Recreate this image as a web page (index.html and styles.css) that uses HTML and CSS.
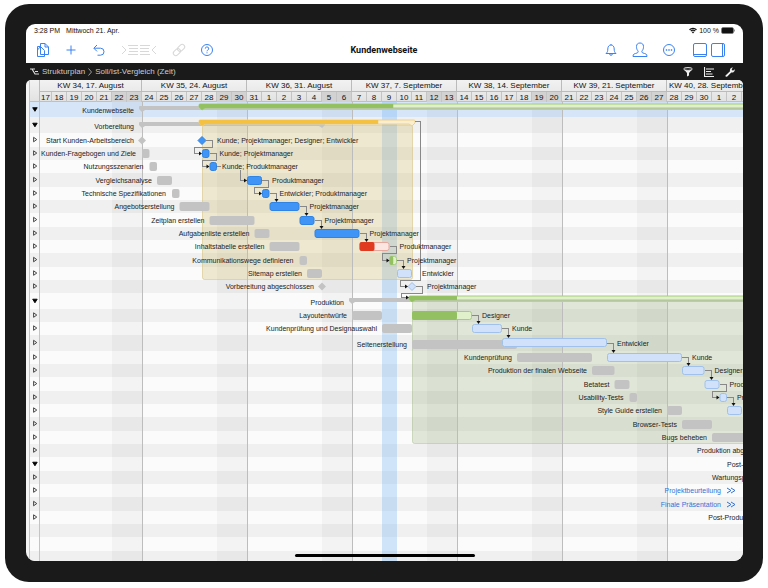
FILE: index.html
```html
<!DOCTYPE html>
<html lang="de">
<head>
    <meta charset="UTF-8">
    <meta name="viewport" content="width=device-width, initial-scale=1.0">
    <title>Kundenwebseite</title>
    <link rel="stylesheet" href="styles.css">
</head>
<body>
    <div class="device">
        <main class="screen">
            <div class="status-bar">
                <span>3:28 PM</span>
                <span>Mittwoch 21. Apr.</span>
                <span class="status-right">
                    <svg width="8" height="7" viewBox="0 0 16 13"><path d="M1 5a10 10 0 0 1 14 0M3.5 7.8a6.400 6.400 0 0 1 9 0" fill="none" stroke="#111" stroke-width="2.400"/><path d="M5.500 9.500a4 4 0 0 1 5 0L8 12.500z" fill="#111"/></svg>
                    <span>100 %</span>
                    <svg width="14" height="7" viewBox="0 0 14 7"><rect x=".5" y=".5" width="12" height="6" rx="1.500" fill="#111" stroke="#777" stroke-width=".6"/><path d="M13.300 2.500v2" stroke="#777"/></svg>
                </span>
            </div>

            <header class="toolbar">
                <div class="tools">
                    <button aria-label="Dokumente"><svg viewBox="0 0 16 16"><path d="M5.500 4.500h-3v10h7v-2M5.500 12.500v-11h4.500l3.500 3.500v7.500zM10 1.500V5h3.500M2.500 8l3-3.500 4 4v4"/></svg></button>
                    <button aria-label="Neu"><svg viewBox="0 0 16 16"><path d="M8 3.500v9M3.500 8h9"/></svg></button>
                    <button aria-label="Widerrufen"><svg viewBox="0 0 16 16"><path d="M6 3 2.800 6.200 6 9.400M3 6.200h6.500a3.500 3.500 0 0 1 0 7H6.500"/></svg></button>
                    <div class="pair indent">
                        <button aria-label="Einrücken" disabled><svg viewBox="0 0 16 16"><path d="m0 4 4 4-4 4M6 3.500h10M7 6.500h9M7 9.500h9M6 12.500h10"/></svg></button>
                        <button aria-label="Ausrücken" disabled><svg viewBox="0 0 16 16"><path d="m16 4-4 4 4 4M0 3.500h10M0 6.500h9M0 9.500h9M0 12.500h10"/></svg></button>
                    </div>
                    <button aria-label="Verknüpfen" disabled><svg viewBox="0 0 16 16"><g transform="rotate(-45 8 8)"><rect x="1" y="5.500" width="8" height="5" rx="2.500"/><rect x="7" y="5.500" width="8" height="5" rx="2.500"/></g></svg></button>
                    <button aria-label="Hilfe"><svg viewBox="0 0 16 16"><circle cx="8" cy="8" r="5.500"/><path d="M6.300 6.600a1.700 1.700 0 1 1 2.500 1.500Q8 8.500 8 9.300M8 10.300v1"/></svg></button>
                </div>
                <h1>Kundenwebseite</h1>
                <div class="tools tools-right">
                    <button aria-label="Mitteilungen"><svg viewBox="0 0 16 16"><path d="M3 11.500c1.500-1.300 1.800-2.500 1.800-4.500C4.800 4.600 6 3 8 3s3.200 1.600 3.200 4c0 2 .3 3.200 1.800 4.500zM6.700 12a1.300 1.300 0 0 0 2.600 0M8 3V2"/></svg></button>
                    <button aria-label="Ressourcen"><svg viewBox="0 0 16 16"><path d="M1 14.500c0-3 1.500-2.500 4-3.500 1.300-.5 1.500-1.300.8-2.300C4.800 7.500 4.500 6.300 4.500 4.500c0-2.300 1.400-3.500 3.500-3.500s3.500 1.200 3.500 3.500c0 1.800-.3 3-1.300 4.200-.7 1-.5 1.800.8 2.300 2.500 1 4 .5 4 3.500z"/></svg></button>
                    <button aria-label="Mehr"><svg viewBox="0 0 16 16"><circle cx="8" cy="8" r="5.500"/><path d="M4.800 8h1.400M7.300 8h1.400M9.800 8h1.400" stroke-width="1.600"/></svg></button>
                    <div class="pair panels">
                        <button aria-label="Untere Leiste"><svg viewBox="0 0 14 14"><rect x=".5" y=".5" width="13" height="13" rx="1.500"/><path d="M1 11.500h12"/></svg></button>
                        <button aria-label="Inspektor"><svg viewBox="0 0 14 14"><rect x=".5" y=".5" width="13" height="13" rx="1.500"/><path d="M11.500 1v12"/></svg></button>
                    </div>
                </div>
            </header>

            <nav class="path-bar">
                <svg width="9" height="8" viewBox="0 0 9 8"><path d="M0 1h5M2 1l3 5h4M5 3.500h3" fill="none" stroke="#ddd" stroke-width="1.200"/></svg>
                <a href="#">Strukturplan</a>
                <svg width="4" height="8" viewBox="0 0 4 8"><path d="m.5.5 3 3.500-3 3.500" fill="none" stroke="#bbb" stroke-width=".8"/></svg>
                <a href="#">Soll/Ist-Vergleich (Zeit)</a>
                <div class="path-actions">
                    <button aria-label="Filter"><svg viewBox="0 0 10 10"><ellipse cx="5" cy="2" rx="4.300" ry="1.400" fill="none" stroke="#eee"/><path d="M1 2.500 4 6v3.500l2-1V6l3-3.500L5 4z" fill="#eee"/></svg></button>
                    <button aria-label="Ansicht"><svg viewBox="0 0 10 10"><path d="M.5 0v9.500H10M2 2h8M2 4.500h5M2 7h6.500" fill="none" stroke="#eee" stroke-width="1.200"/></svg></button>
                    <button aria-label="Einstellungen"><svg viewBox="0 0 10 10"><path d="M.5 8.500 5 4.200C4.500 2 6 .3 8 .5L6.700 2l.3 1.200 1.300.3L9.700 2.200C10 4.300 8.300 6 6.300 5.500L2 9.700C1 10.200 0 9.500.5 8.500z" fill="#eee"/></svg></button>
                </div>
            </nav>

            <section class="chart">
                <div class="handle"></div>
                <div class="chart-main">
                    <div class="scale">
                        <div class="scale-corner"></div>
                        <div class="scale-rows">
                            <div class="weeks" id="weeks"></div>
                            <div class="days" id="days"></div>
                        </div>
                    </div>
                    <div class="rows" id="rows">
                        <svg class="plot" id="plot"></svg>
                    </div>
                </div>
            </section>
            <div class="home-bar"></div>
        </main>
        <span class="key key-side"></span>
        <span class="key key-left"></span>
        <span class="key key-right"></span>
    </div>
    <script src="gantt.js"></script>
</body>
</html>
```

FILE: styles.css
```css
* {
    box-sizing: border-box;
}
body {
    margin: 4px 5px;
    background: #fff;
    font-family: "Liberation Sans", Arial, sans-serif;
    font-size: 7px;
    color: #111;
}
button {
    display: block;
    margin: 0;
    padding: 0;
    border: none;
    background: none;
    color: inherit;
}
button svg {
    display: block;
    width: 100%;
    height: 100%;
}

/* device */
.device {
    position: relative;
    padding: 20px 20px 21px 21px;
    border-radius: 24px;
    background: #1a1a1a;
}
.screen {
    position: relative;
    overflow: hidden;
    border-radius: 9px;
    background: #1a1a1a;
}
.key {
    position: absolute;
    background: #333;
}
.key-side {
    right: -3px;
    bottom: 21px;
    width: 3px;
    height: 27px;
}
.key-left,
.key-right {
    bottom: -3px;
    width: 25px;
    height: 3px;
}
.key-left {
    right: 77px;
}
.key-right {
    right: 44px;
}
.home-bar {
    position: absolute;
    left: 50%;
    bottom: 4px;
    width: 180px;
    height: 3px;
    margin-left: -90px;
    border-radius: 2px;
    background: #000;
}

/* top bars */
.status-bar {
    display: flex;
    align-items: center;
    gap: 6px;
    height: 13px;
    padding: 0 8px;
    background: #fff;
}
.status-right {
    display: flex;
    align-items: center;
    gap: 2px;
    margin-left: auto;
}
.toolbar {
    display: grid;
    grid-template-columns: 1fr auto 1fr;
    align-items: center;
    height: 26px;
    padding: 0 18px 0 9px;
    background: #fff;
}
.toolbar h1 {
    margin: 0;
    padding-left: 8px;
    font-family: Roboto, "Liberation Sans", sans-serif;
    font-size: 9px;
    font-weight: 700;
}
.tools {
    display: flex;
    align-items: center;
    gap: 12px;
}
.tools-right {
    justify-content: flex-end;
    gap: 13px;
}
.tools button {
    width: 16px;
    height: 16px;
    color: #3b82f0;
}
.tools button:disabled {
    color: #d8d8d8;
}
.tools svg {
    fill: none;
    stroke: currentColor;
    stroke-width: 1;
}
.pair {
    display: flex;
}
.indent {
    gap: 2px;
    margin: 0 3px;
}
.panels {
    gap: 4px;
    margin-left: 3px;
}
.tools .panels button {
    width: 14px;
    height: 14px;
}
.path-bar {
    display: flex;
    align-items: center;
    gap: 3px;
    height: 17px;
    padding: 0 8px 0 4px;
    font-size: 8px;
}
.path-bar a {
    color: #ccc;
    text-decoration: none;
}
.path-actions {
    display: flex;
    gap: 11px;
    margin-left: auto;
}
.path-actions button {
    width: 10px;
    height: 10px;
}

/* chart */
.chart {
    display: flex;
    overflow: hidden;
    border-radius: 5px 5px 0 0;
    background: #f4f4f4;
}
.handle {
    width: 4px;
    border-right: 1px solid #c4c4c4;
}
.chart-main {
    flex: 1;
    min-width: 0;
}
.scale {
    display: flex;
    height: 22px;
    background: linear-gradient(#f2f2f2, #e2e2e2);
    border-bottom: 1px solid #a9c4ea;
}
.scale-corner {
    width: 10px;
    border-right: 1px solid #bbb;
}
.scale-rows {
    flex: 1;
    min-width: 0;
}
.weeks,
.days {
    display: flex;
    overflow: hidden;
    line-height: 11px;
    font-size: 8px;
    text-align: center;
    white-space: nowrap;
}
.weeks {
    border-bottom: 1px solid #bbb;
}
.weeks span {
    flex: 0 0 105px;
    border-right: 1px solid #bbb;
}
.weeks span:first-child {
    flex-basis: 102px;
}
.weeks span:last-child {
    flex: 1;
    min-width: 0;
    padding-left: 2px;
    border-right: none;
    text-align: left;
}
.days span {
    flex: 0 0 15px;
    border-right: 1px solid #c4c4c4;
}
.days span:first-child {
    flex-basis: 12px;
}
.days .weekend {
    background: #d2d2d2;
}
.rows {
    position: relative;
}
.row {
    height: 13px;
    background: #fbfbfb;
}
.row:nth-of-type(3n) {
    height: 14px;
}
.row:nth-of-type(even) {
    background: #f0f0f0;
}
.row.summary {
    height: 16px;
}
.row.selected {
    height: 15px;
    background: #d6e5f8;
}
.row:last-of-type {
    height: 10px;
}
.toggle {
    width: 10px;
    height: 100%;
    border-right: 1px solid #c4c4c4;
}
.toggle svg {
    fill: none;
    stroke: #333;
    stroke-width: 1;
}
.toggle[aria-expanded="true"] svg {
    fill: #000;
    stroke: #000;
}

/* drawing over the rows */
.plot {
    position: absolute;
    top: 0;
    left: 10px;
    width: calc(100% - 10px);
    height: 100%;
    overflow: hidden;
}
.plot text {
    font-size: 7px;
    fill: #222;
}
.plot a text {
    fill: #2f73d9;
}
.weekend-col {
    fill: rgba(0, 0, 0, 0.03);
}
.today-col {
    fill: rgba(110, 175, 245, 0.3);
}
.week-line {
    stroke: #bdbdbd;
    shape-rendering: crispEdges;
}
.area-yellow {
    fill: rgba(205, 175, 85, 0.25);
    stroke: rgba(205, 175, 85, 0.4);
}
.area-green {
    fill: rgba(120, 155, 85, 0.2);
    stroke: rgba(120, 155, 85, 0.3);
}
.link {
    fill: none;
    stroke: #888;
    shape-rendering: crispEdges;
}
.arrow {
    fill: #111;
}
.plan {
    fill: #c3c3c3;
}
.blue {
    fill: #3f94f6;
    stroke: #2f83e4;
}
.open {
    fill: #d0e1f9;
    stroke: #9fc1ec;
}
.green {
    fill: #93c162;
}
.green-rest {
    fill: #e0f0cb;
    stroke: #a6cc7d;
}
.red {
    fill: #e03a20;
}
.red-rest {
    fill: #fce6e2;
    stroke: #e6a79d;
}
.yellow {
    fill: #f4c142;
}
.yellow-rest {
    fill: #fbeed0;
    stroke: #ecd28c;
}
```

FILE: gantt.js
```js
const DAY = 15;
const START = new Date(2020, 7, 17);
const NS = 'http://www.w3.org/2000/svg';

// plan / real: [start, end] in days since 17. August, done: day the progress reaches
const tasks = [
    { name: 'Kundenwebseite', kind: 'summary', selected: true, plan: [7, 60], real: [11, 60], done: 23.75, color: 'green' },
    { name: 'Vorbereitung', kind: 'summary', plan: [7, 19], real: [11, 25], done: 22.75, color: 'yellow' },
    { name: 'Start Kunden-Arbeitsbereich', kind: 'milestone', plan: [7, 7], real: [11, 11], color: 'blue', who: 'Kunde; Projektmanager; Designer; Entwickler' },
    { name: 'Kunden-Fragebogen und Ziele', plan: [7, 7.5], real: [11, 11.5], color: 'blue', who: 'Kunde; Projektmanager' },
    { name: 'Nutzungsszenarien', plan: [7.5, 8], real: [11.5, 12], color: 'blue', who: 'Kunde; Produktmanager', near: true },
    { name: 'Vergleichsanalyse', plan: [8, 9], real: [14, 15], color: 'blue', who: 'Produktmanager' },
    { name: 'Technische Spezifikationen', plan: [9, 9.5], real: [15, 15.5], color: 'blue', who: 'Entwickler; Produktmanager' },
    { name: 'Angebotserstellung', plan: [9.5, 11.5], real: [15.5, 17.5], color: 'blue', who: 'Projektmanager' },
    { name: 'Zeitplan erstellen', plan: [11.5, 14.5], real: [17.5, 18.5], color: 'blue', who: 'Projektmanager' },
    { name: 'Aufgabenliste erstellen', plan: [14.5, 15.5], real: [18.5, 21.5], color: 'blue', who: 'Projektmanager' },
    { name: 'Inhaltstabelle erstellen', plan: [15.5, 17.5], real: [21.5, 23.5], done: 22.5, color: 'red', who: 'Produktmanager' },
    { name: 'Kommunikationswege definieren', plan: [17.5, 18], real: [23.5, 24], done: 23.75, color: 'green', who: 'Projektmanager' },
    { name: 'Sitemap erstellen', plan: [18, 19], real: [24, 25], color: 'open', who: 'Entwickler' },
    { name: 'Vorbereitung abgeschlossen', kind: 'milestone', plan: [19, 19], real: [25, 25], color: 'open', who: 'Projektmanager' },
    { name: 'Produktion', kind: 'summary', plan: [21, 60], real: [25, 60], done: 28, color: 'green' },
    { name: 'Layoutentwürfe', plan: [21, 23], real: [25, 29], done: 28, color: 'green', who: 'Designer' },
    { name: 'Kundenprüfung und Designauswahl', plan: [23, 25], real: [29, 31], color: 'open', who: 'Kunde' },
    { name: 'Seitenerstellung', tall: true, plan: [25, 32], real: [31, 38], color: 'open', who: 'Entwickler' },
    { name: 'Kundenprüfung', plan: [32, 37], real: [38, 43], color: 'open', who: 'Kunde' },
    { name: 'Produktion der finalen Webseite', plan: [37, 38.5], real: [43, 44.5], color: 'open', who: 'Designer; Entwickler' },
    { name: 'Betatest', plan: [38.5, 39.5], real: [44.5, 45.5], color: 'open', who: 'Produktmanager' },
    { name: 'Usability-Tests', plan: [39.5, 40], real: [45.5, 46], color: 'open', who: 'Produktmanager' },
    { name: 'Style Guide erstellen', plan: [42, 43], real: [46, 47], color: 'open' },
    { name: 'Browser-Tests', plan: [43, 45] },
    { name: 'Bugs beheben', plan: [45, 49] },
    { name: 'Produktion abgeschlossen', textFrom: 44 },
    { name: 'Post-Produktion', kind: 'summary', flat: true, textFrom: 46 },
    { name: 'Wartungsplan', textFrom: 45 },
    { name: 'Projektbeurteilung', offscreen: true },
    { name: 'Finale Präsentation', offscreen: true },
    { name: 'Post-Produktion abgeschlossen', textFrom: 44.75 },
    {}, {}, {}
];

const rowsEl = document.getElementById('rows');
const plot = document.getElementById('plot');

function x(day) {
    return day * DAY - 3;
}

function add(tag, attrs, text, parent = plot) {
    const el = document.createElementNS(NS, tag);
    for (const key in attrs) el.setAttribute(key, attrs[key]);
    if (text) el.textContent = text;
    parent.appendChild(el);
    return el;
}

function cell(parent, text, className) {
    const el = document.createElement('span');
    el.textContent = text;
    if (className) el.className = className;
    parent.appendChild(el);
}

// rows with their disclosure buttons
tasks.forEach(t => {
    const row = document.createElement('div');
    row.className = 'row';
    if ((t.kind === 'summary' && !t.flat) || t.tall) row.classList.add('summary');
    if (t.selected) row.classList.add('selected');
    const open = t.kind === 'summary';
    const shape = open ? 'M3 4.500h5L5.500 8.500z' : 'M4 3.500v5l3.500-2.500z';
    row.innerHTML = t.name
        ? `<button class="toggle" aria-label="${t.name}" aria-expanded="${open}"><svg viewBox="0 0 10 13"><path d="${shape}"/></svg></button>`
        : '<div class="toggle"></div>';
    rowsEl.appendChild(row);
    t.row = row;
});

// time scale
const width = plot.getBoundingClientRect().width;
const height = rowsEl.offsetHeight;
const dayCount = Math.floor((width + 3) / DAY);
const weeks = document.getElementById('weeks');
const days = document.getElementById('days');

for (let d = 0; d < dayCount; d++) {
    const date = new Date(START);
    date.setDate(START.getDate() + d);
    const weekend = d % 7 > 4;
    cell(days, date.getDate(), weekend ? 'weekend' : '');
    if (weekend) add('rect', { class: 'weekend-col', x: x(d), y: 0, width: DAY, height });
    if (d % 7 === 0) {
        const month = date.toLocaleDateString('de-DE', { month: 'long' });
        cell(weeks, `KW ${34 + d / 7}, ${date.getDate()}. ${month}`);
    }
}
add('rect', { class: 'today-col', x: x(23), y: 0, width: DAY, height });

tasks.forEach(t => {
    t.top = t.row.offsetTop;
    t.mid = t.top + Math.floor(t.row.offsetHeight / 2);
});

function area(from, to, first, last, className) {
    const y = tasks[first].mid;
    add('rect', { class: className, x: x(from) + 0.5, y, width: (to - from) * DAY, height: tasks[last].top - y - 0.5, rx: 2 });
}
area(11, 25, 1, 13, 'area-yellow');
area(25, 60, 14, 25, 'area-green');

for (let d = 7; d < dayCount; d += 7) {
    add('line', { class: 'week-line', x1: x(d) + 0.5, x2: x(d) + 0.5, y1: 0, y2: height });
}

function bar(from, to, y, className, stroked) {
    const o = stroked ? 0.5 : 0;
    add('rect', { class: className, x: x(from) + o, y: y + o, width: (to - from) * DAY - o * 2, height: 9 - o * 2, rx: 2 });
}

function diamond(day, mid, className) {
    add('path', { class: className, d: `M${x(day) - 4} ${mid}l4-4 4 4-4 4z` });
}

function bracket(from, to, y, className) {
    add('path', { class: className, d: `M${x(from) - 3} ${y + 1}q0-1 1-1H${x(to) + 2}q1 0 1 1v2l-3 3-3-2H${x(from) + 3}l-3 2-3-3z` });
}

function drawSummary(t) {
    const y = t.mid - 5;
    bracket(t.plan[0], t.plan[1], y + 2, 'plan');
    bracket(t.real[0], t.real[1], y, t.color + '-rest');
    add('path', { class: t.color, d: `M${x(t.real[0]) - 3} ${y + 1}q0-1 1-1H${x(t.done)}v4H${x(t.real[0]) + 3}l-3 2-3-3z` });
}

function drawTask(t) {
    const shift = t.tall ? 1 : 0;
    if (t.kind === 'milestone') {
        diamond(t.plan[0], t.mid + 0.5, 'plan');
        diamond(t.real[0], t.mid + 0.5, t.color);
        return;
    }
    bar(t.plan[0], t.plan[1], t.mid - 4 + shift, 'plan');
    if (!t.real) return;
    if (t.done) {
        bar(t.real[0], t.real[1], t.mid - 4, t.color + '-rest', true);
        bar(t.real[0], t.done, t.mid - 4, t.color);
    } else {
        bar(t.real[0], t.real[1], t.mid - 4 - shift, t.color, true);
    }
}

tasks.forEach(t => {
    if (!t.plan) return;
    if (t.kind === 'summary') drawSummary(t);
    else drawTask(t);
});

function arrow(px, py, down) {
    const d = down ? `M${px - 2} ${py - 3}h4l-2 3z` : `M${px - 3} ${py - 2}v4l3-2z`;
    add('path', { class: 'arrow', d });
}

// successor starts where the task ends: straight down on its bar
function linkDown(i) {
    const a = tasks[i], b = tasks[i + 1];
    const px = Math.round(x(a.real[1])) + 6.5;
    const end = b.mid - (b.tall ? 5 : 4);
    add('path', { class: 'link', d: `M${x(a.real[1])} ${a.mid + 0.5}H${px}V${end - 2}` });
    arrow(px, end, true);
}

// short bars: loop back and enter from the left
function linkBack(i, fromX, toX) {
    const a = tasks[i], b = tasks[i + 1];
    const right = Math.round(fromX) + 6.5;
    const left = Math.round(toX) - 7.5;
    const y2 = b.kind === 'summary' ? b.mid - 4 : b.mid;
    add('path', { class: 'link', d: `M${fromX} ${a.mid + 0.5}H${right}V${b.top + 0.5}H${left}V${y2 + 0.5}H${toX - 2}` });
    arrow(toX, y2 + 0.5, false);
}

linkBack(2, x(11) + 4, x(11));
linkBack(3, x(11.5), x(11.5));
add('path', { class: 'link', d: `M${x(12)} ${tasks[4].mid + 0.5}h4M${x(13.5) + 0.5} ${tasks[4].mid + 4}V${tasks[5].mid + 0.5}H${x(14)}` });
arrow(x(14), tasks[5].mid + 0.5, false);
linkBack(5, x(15), x(15));
[6, 7, 8, 9].forEach(linkDown);
linkBack(10, x(23.5), x(23.5));
linkDown(11);
add('path', { class: 'link', d: `M${x(25) + 3} ${tasks[1].mid - 3.5}h5.500V${tasks[13].top + 0.5}H${x(24) + 3.5}V${tasks[13].mid + 0.5}H${x(25) - 6}` });
arrow(x(25) - 4, tasks[13].mid + 0.5, false);
linkBack(13, x(25) + 4, x(25) - 3);
[15, 16, 17, 18, 19].forEach(linkDown);
linkBack(20, x(45.5), x(45.5));
linkDown(21);

// space between a planned bar and its name
function nameGap(t) {
    if (t.kind) return 8;
    return t.plan[1] - t.plan[0] < 1 ? 6 : 5;
}

// names left of the planned bar, resources right of the real one
tasks.forEach(t => {
    if (!t.name) return;
    const y = t.mid + (t.row.classList.contains('summary') ? 4 : 3);
    if (t.plan) {
        add('text', { x: x(t.plan[0]) - nameGap(t), y, 'text-anchor': 'end' }, t.name);
        if (t.who) {
            const space = t.kind === 'milestone' ? 15 : t.near ? 5 : 10;
            add('text', { x: x(t.real[1]) + space, y: t.mid + 3 }, t.who);
        }
    } else if (t.offscreen) {
        const a = add('a', { href: '#' });
        add('text', { x: width - 22, y, 'text-anchor': 'end' }, t.name, a);
        add('path', { d: `M${width - 16} ${t.mid - 2}l4 2.500-4 2.500m4-5 4 2.500-4 2.500`, fill: 'none', stroke: '#2f73d9' }, '', a);
    } else {
        add('text', { x: x(t.textFrom), y }, t.name);
    }
});
```
